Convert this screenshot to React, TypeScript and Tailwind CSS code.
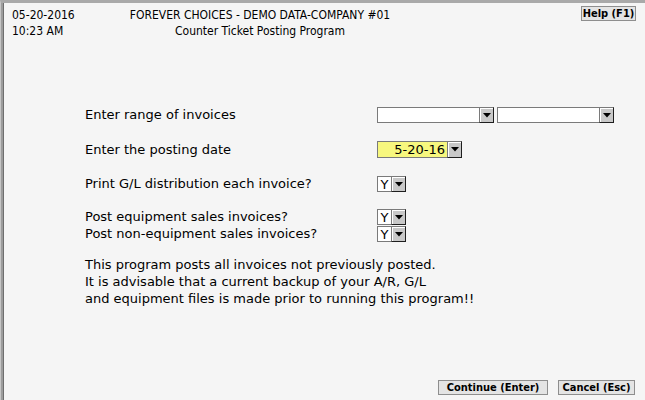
import React from 'react';

const headFont = "font-['DejaVu_Sans_Condensed','DejaVu_Sans',sans-serif] [font-stretch:condensed]";
const bodyFont = "font-['DejaVu_Sans',Verdana,sans-serif]";

const DropButton: React.FC = () => (
  <span className="flex h-full w-[15px] items-center justify-center border border-[#7a7a7a] border-r-[#1e1e1e] border-b-[#1e1e1e] bg-[#c8c8c8] shadow-[inset_1px_1px_0_#ffffff]">
    <svg width="8" height="5" viewBox="0 0 8 5">
      <polygon points="0,0 8,0 4,4.5" fill="#000" />
    </svg>
  </span>
);

const Combo: React.FC<{ width: number; value?: string; yellow?: boolean; height?: string }> = ({ width, value, yellow, height = 'h-[16px]' }) => (
  <div className={`flex ${height}`}>
    <div
      className={`flex items-center justify-end border border-r-0 border-[#7a7a7a] pr-[2px] text-[13px] leading-none ${yellow ? 'bg-[#f7f77e]' : 'bg-white'}`}
      style={{ width }}
    >
      {value}
    </div>
    <DropButton />
  </div>
);

const YesBox: React.FC = () => (
  <div className="flex h-[16px]">
    <div className="flex w-[14px] items-center justify-center border border-r-0 border-[#7a7a7a] bg-white text-[13px] leading-none">Y</div>
    <DropButton />
  </div>
);

const Row: React.FC<{ label: string; className?: string; children: React.ReactNode }> = ({ label, className = 'h-[16px]', children }) => (
  <div className={`flex items-center ${className}`}>
    <div className="w-[292px]">{label}</div>
    {children}
  </div>
);

const App: React.FC = () => {
  return (
    <div className="h-[400px] w-[645px] border-t-[3px] border-l border-t-[#a9a9a9] border-l-[#c6c6c6] bg-[#f5f5f5]">
      <div className="h-full border-l-2 border-[#9c9c9c]">
        <div className="flex h-full flex-col border-l border-[#6e6e6e] text-black">
          {/* Header */}
          <div className={`flex pt-[4px] pl-[8px] text-[12px] leading-[16px] ${headFont}`}>
            <div className="w-[100px]">
              <div>05-20-2016</div>
              <div>10:23 AM</div>
            </div>
            <div className="w-[296px] text-center">
              <div>FOREVER CHOICES - DEMO DATA-COMPANY #01</div>
              <div>Counter Ticket Posting Program</div>
            </div>
            <div className="flex flex-1 justify-end pr-[9px]">
              <button className="-mt-[1px] h-[15px] w-[55px] border border-[#8e8e8e] bg-[#e4e4e4] text-[11px] leading-none font-bold">
                Help (F1)
              </button>
            </div>
          </div>

          {/* Form */}
          <div className={`pl-[81px] text-[13px] ${bodyFont}`}>
            <Row label="Enter range of invoices" className="mt-[68px] h-[16px]">
              <div className="flex gap-[3px]">
                <Combo width={102} />
                <Combo width={102} />
              </div>
            </Row>
            <Row label="Enter the posting date" className="mt-[18px] h-[17px]">
              <Combo width={70} value="5-20-16" yellow height="h-[17px]" />
            </Row>
            <Row label="Print G/L distribution each invoice?" className="mt-[18px] h-[16px]">
              <YesBox />
            </Row>
            <Row label="Post equipment sales invoices?" className="mt-[17px] h-[16px]">
              <YesBox />
            </Row>
            <Row label="Post non-equipment sales invoices?" className="mt-[1px] h-[16px]">
              <YesBox />
            </Row>
            <div className="mt-[14px] leading-[17px]">
              <p>This program posts all invoices not previously posted.</p>
              <p>It is advisable that a current backup of your A/R, G/L</p>
              <p>and equipment files is made prior to running this program!!</p>
            </div>
          </div>

          {/* Footer buttons */}
          <div className={`mt-auto flex justify-end gap-[10px] pr-[10px] pb-[5px] text-[11px] font-bold ${headFont}`}>
            <button className="h-[15px] w-[110px] border border-[#8e8e8e] bg-[#e4e4e4] leading-none">Continue (Enter)</button>
            <button className="h-[15px] w-[77px] border border-[#8e8e8e] bg-[#e4e4e4] leading-none">Cancel (Esc)</button>
          </div>
        </div>
      </div>
    </div>
  );
};

export default App;
